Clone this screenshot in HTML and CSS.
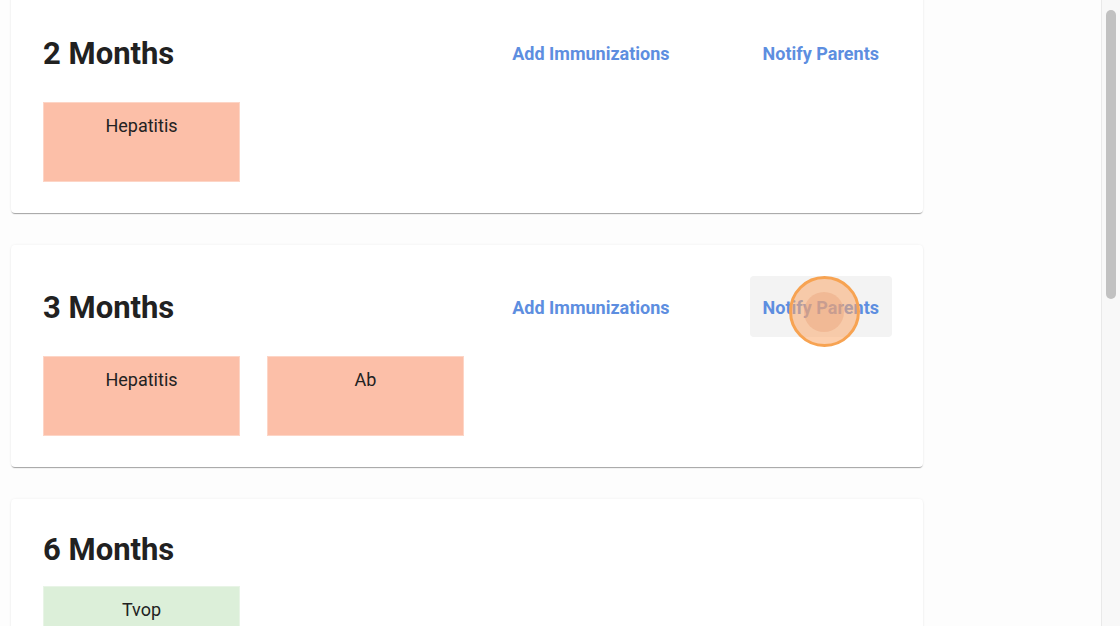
FILE: index.html
```html
<!DOCTYPE html>
<html>
<head>
<meta charset="utf-8">
<link rel="stylesheet" href="styles.css">
</head>
<body>
<div class="app">
  <main class="main">
    <div class="list">
      <section class="card">
        <div class="card-head">
          <h2 class="title">2 Months</h2>
          <div class="actions">
            <button class="btn">Add Immunizations</button>
            <button class="btn">Notify Parents</button>
          </div>
        </div>
        <div class="boxes">
          <div class="vaccine due">Hepatitis</div>
        </div>
      </section>
      <section class="card">
        <div class="card-head">
          <h2 class="title">3 Months</h2>
          <div class="actions">
            <button class="btn">Add Immunizations</button>
            <button class="btn hover">Notify Parents<span class="click"><span class="click-inner"></span></span></button>
          </div>
        </div>
        <div class="boxes">
          <div class="vaccine due">Hepatitis</div>
          <div class="vaccine due">Ab</div>
        </div>
      </section>
      <section class="card">
        <div class="card-head">
          <h2 class="title">6 Months</h2>
        </div>
        <div class="boxes">
          <div class="vaccine done">Tvop</div>
        </div>
      </section>
    </div>
  </main>
  <div class="scrollbar"><div class="thumb"></div></div>
</div>
</body>
</html>
```

FILE: styles.css
```css
html, body {
  margin: 0;
  padding: 0;
  height: 100%;
  overflow: hidden;
  background: #fdfdfd;
  font-family: Roboto, "Liberation Sans", Arial, sans-serif;
}
.app {
  display: flex;
  height: 626px;
}
.main {
  flex: 1;
  overflow: hidden;
}
.list {
  display: flex;
  flex-direction: column;
  gap: 32px;
  margin-top: -9px;
  margin-left: 11px;
  width: 912px;
}
.card {
  background: #fff;
  border-radius: 4px;
  box-shadow: 0 1px 1px rgba(0,0,0,0.12), 0 2px 1px -1px rgba(0,0,0,0.25), 0 0 3px rgba(0,0,0,0.06);
  padding: 31px 31px 31px 32px;
  display: flex;
  flex-direction: column;
  gap: 19px;
}
.card-head {
  display: flex;
  align-items: center;
  justify-content: space-between;
}
.title {
  margin: 0;
  font-size: 31px;
  line-height: 35px;
  padding-top: 2px;
  font-weight: 700;
  color: #212121;
}
.actions {
  display: flex;
  gap: 67px;
}
.btn {
  position: relative;
  box-sizing: border-box;
  border: 0;
  background: transparent;
  font-family: Roboto, "Liberation Sans", Arial, sans-serif;
  font-size: 18px;
  font-weight: 700;
  color: #5d8ee0;
  padding: 2px 13px 0;
  height: 61px;
  border-radius: 4px;
  cursor: pointer;
}
.btn.hover {
  background: #f3f3f3;
}
.click {
  position: absolute;
  left: 39px;
  top: 0;
  width: 65px;
  height: 65px;
  border-radius: 50%;
  border: 3px solid #f7a352;
  background: rgba(249, 168, 108, 0.55);
  display: flex;
  align-items: center;
  justify-content: center;
}
.click-inner {
  width: 40px;
  height: 40px;
  border-radius: 50%;
  background: rgba(232, 160, 120, 0.4);
}
.boxes {
  display: flex;
  gap: 27px;
}
.vaccine {
  width: 195px;
  border: 1px solid rgba(255,255,255,0.35);
  text-align: center;
  font-size: 18px;
  line-height: 24px;
  padding-top: 11px;
  height: 67px;
  box-sizing: content-box;
  color: #222;
}
.vaccine.due {
  background: #fcbfa8;
}
.vaccine.done {
  background: #dcefd9;
}
.scrollbar {
  width: 18px;
  flex: none;
  background: #f8f8f8;
  border-left: 1px solid #e9e9e9;
}
.thumb {
  margin: 10px 0 0 4px;
  width: 10px;
  height: 289px;
  border-radius: 5px;
  background: #c1c1c1;
}
```
